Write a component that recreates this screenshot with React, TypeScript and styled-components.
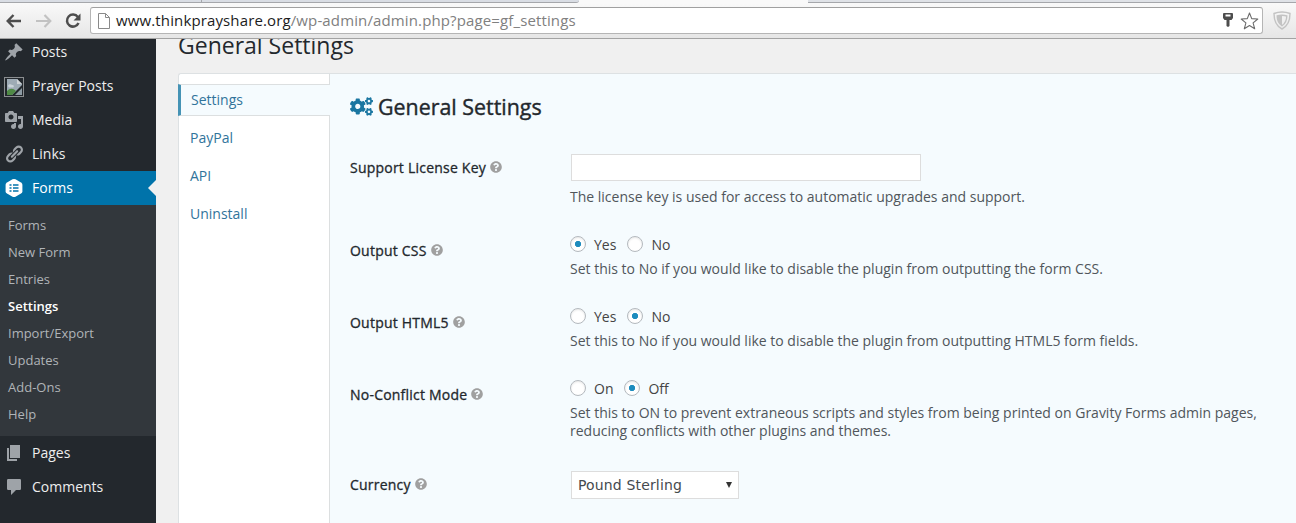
import React from 'react';
import styled, { createGlobalStyle, css } from 'styled-components';
import { FaCogs, FaQuestionCircle } from 'react-icons/fa';

const GlobalStyle = createGlobalStyle`
  * { box-sizing: border-box; }
  body { margin: 0; background: #f0f0f0; font-family: 'Open Sans', 'Noto Sans', sans-serif; font-size: 14px; color: #444; }
  p, h1, h2 { margin: 0; }
`;

const Window = styled.div`
  display: flex;
  flex-direction: column;
  width: 1296px;
  height: 523px;
  overflow: hidden;
`;

/* Browser chrome */
const TabStrip = styled.div`
  display: flex;
  height: 3px;
  background: #f5f6f8;
  flex: none;
`;
const BackTabs = styled.div`
  display: flex;
  justify-content: flex-end;
  width: 579px;
  background: #d9dde4;
  border-bottom: 1px solid #a5a7ab;
  border-bottom-right-radius: 3px;
`;
const TabEdge = styled.div`
  width: 378px;
  border-left: 1px solid #a5a7ab;
`;
const ActiveTab = styled.div`
  width: 229px;
  background: #f9f9f9;
`;
const OtherTabs = styled.div`
  flex: 1;
  background: #dfe2e7;
  border-bottom: 1px solid #a5a7ab;
`;
const Toolbar = styled.div`
  display: flex;
  align-items: center;
  flex: none;
  height: 36px;
  padding: 0 5px 0 6px;
  background: linear-gradient(#f9f9f9, #e6e6e6);
  border-bottom: 1px solid #a3a3a3;
`;
const NavIcon = styled.svg<{ $gap: number }>`
  flex: none;
  margin-right: ${p => p.$gap}px;
`;
const ShieldIcon = styled.svg`
  flex: none;
  margin-left: 10px;
`;
const AddressBar = styled.div`
  display: flex;
  align-items: center;
  flex: 1;
  height: 27px;
  padding: 0 3px 0 7px;
  background: #fff;
  border: 1px solid #b5b5b5;
  border-top-color: #a0a0a0;
  border-radius: 3px;
`;
const Url = styled.div`
  flex: 1;
  margin-left: 6px;
  padding-bottom: 1px;
  font-size: 15px;
  line-height: 24px;
  letter-spacing: 0.13px;
  color: #808080;
  white-space: nowrap;
`;
const Host = styled.span`
  color: #1c1c1c;
`;

/* Admin layout */
const Admin = styled.div`
  display: flex;
  flex: 1;
  min-height: 0;
`;
const Sidebar = styled.nav`
  flex: none;
  display: flex;
  flex-direction: column;
  width: 156px;
  background: #23282d;
  overflow: hidden;
`;
const Menu = styled.div`
  margin-top: -4px;
`;
const MenuRow = styled.div<{ $active?: boolean }>`
  display: flex;
  align-items: center;
  gap: 8px;
  height: 34px;
  padding-left: 4px;
  color: #eee;
  fill: #9ea3a8;
  ${p => p.$active && css`
    background: #0073aa;
    color: #fff;
    fill: #fff;
  `}
  svg { flex: none; }
`;
const MenuText = styled.span`
  padding-bottom: 2px;
`;
const Pointer = styled.span`
  margin-left: auto;
  border: 8px solid transparent;
  border-right-color: #f0f0f0;
  border-left: 0;
`;
const SubMenu = styled.div`
  height: 231px;
  padding: 7px 8px;
  background: #32373c;
`;
const SubItem = styled.div<{ $current?: boolean }>`
  height: 27px;
  line-height: 27px;
  font-size: 13px;
  font-weight: ${p => (p.$current ? 600 : 400)};
  color: ${p => (p.$current ? '#fff' : '#b0b4b8')};
`;

const Main = styled.main`
  flex: 1;
  display: flex;
  flex-direction: column;
  padding-left: 22px;
  overflow: hidden;
`;
const PageTitle = styled.h1`
  flex: none;
  height: 38px;
  margin-top: -4px;
  line-height: 20px;
  font-size: 23px;
  font-weight: 400;
  color: #23282d;
`;
const Panel = styled.div`
  flex: 1;
  display: flex;
  background: #f5fbfe;
  border: 1px solid #dde1e3;
  border-width: 1px 0 0 1px;
  border-top-left-radius: 3px;
`;
const Tabs = styled.div`
  flex: none;
  display: flex;
  flex-direction: column;
  width: 151px;
  background: #fff;
  border-top-left-radius: 3px;
`;
const TabSpacer = styled.div<{ $height?: number }>`
  ${p => (p.$height ? `height: ${p.$height}px;` : 'flex: 1;')}
  border-right: 1px solid #dcdfe0;
`;
const Tab = styled.div<{ $active?: boolean }>`
  height: 38px;
  padding-left: 11px;
  line-height: 38px;
  color: #31749b;
  border-right: 1px solid #dcdfe0;
  ${p => p.$active && css`
    height: 32px;
    line-height: 30px;
    padding-left: 10px;
    background: #f5fbfe;
    border: 1px solid #dcdfe0;
    border-width: 1px 0;
    border-left: 3px solid #4593b5;
    margin-left: -1px;
  `}
`;
const Content = styled.section`
  flex: 1;
  padding: 17px 0 0 20px;
`;
const SectionTitle = styled.h2`
  display: flex;
  align-items: center;
  gap: 5px;
  height: 30px;
  font-size: 21.4px;
  font-weight: 400;
  -webkit-text-stroke: 0.4px #23282d;
  color: #23282d;
  svg { color: #1a76a1; -webkit-text-stroke: 0; }
`;
const Row = styled.div<{ $top: number }>`
  display: flex;
  margin-top: ${p => p.$top}px;
`;
const Label = styled.div<{ $height?: number }>`
  display: flex;
  align-items: center;
  gap: 4px;
  flex: none;
  width: 220px;
  height: ${p => p.$height ?? 30}px;
  font-weight: 400;
  -webkit-text-stroke: 0.3px #23282d;
  letter-spacing: 0.22px;
  color: #23282d;
  svg { color: #a0a0a0; margin-bottom: 1px; }
`;
const Field = styled.div`
  width: 700px;
`;
const TextInput = styled.input`
  display: block;
  width: 350px;
  height: 27px;
  margin-left: 1px;
  border: 1px solid #ddd;
  background: #fff;
  outline: none;
`;
const Hint = styled.p`
  line-height: 18px;
  margin-top: 7px;
  color: #50565b;
`;
const Radios = styled.div`
  display: flex;
  height: 18px;
  align-items: center;
`;
const RadioLabel = styled.label`
  display: flex;
  align-items: center;
  gap: 8px;
  margin-right: 11px;
`;
const Radio = styled.span<{ $on?: boolean }>`
  width: 16px;
  height: 16px;
  border: 1px solid #b4b9be;
  border-radius: 50%;
  background: ${p => (p.$on ? 'radial-gradient(circle, #1e8cbe 2.8px, #fff 3.5px)' : '#fff')};
  box-shadow: inset 0 1px 2px rgba(0, 0, 0, 0.1);
`;
const Select = styled.div`
  display: flex;
  align-items: center;
  justify-content: space-between;
  width: 168px;
  height: 28px;
  margin-left: 1px;
  padding: 0 6px 0 6px;
  border: 1px solid #ddd;
  background: #fff;
  font-family: 'DejaVu Sans', sans-serif;
  font-size: 14px;
  letter-spacing: 0.15px;
  color: #454a4e;
`;

const dash = {
  post: 'M10.44 3.02l1.82-1.82 6.36 6.35-1.83 1.82c-1.05-.68-2.48-.57-3.41.36l-.75.75c-.92.93-1.04 2.35-.35 3.41l-1.83 1.82-2.41-2.41-2.8 2.79c-.42.42-3.38 2.71-3.8 2.29s1.86-3.39 2.28-3.81l2.79-2.79L4.1 9.36l1.83-1.82c1.05.69 2.48.57 3.4-.36l.75-.75c.93-.92 1.05-2.35.36-3.41z',
  media: 'M13 11V4c0-.55-.45-1-1-1h-1.67L9 1H5L3.67 3H2c-.55 0-1 .45-1 1v7c0 .55.45 1 1 1h10c.55 0 1-.45 1-1zM7 4.5c1.38 0 2.5 1.12 2.5 2.5S8.38 9.5 7 9.5 4.5 8.38 4.5 7 5.62 4.5 7 4.5zM14 6h5v10.5c0 1.38-1.12 2.5-2.5 2.5S14 17.88 14 16.5s1.12-2.5 2.5-2.5c.17 0 .34.02.5.05V9h-3V6zm-4 8.05V13h2v3.5c0 1.38-1.12 2.5-2.5 2.5S7 17.88 7 16.5 8.12 14 9.5 14c.17 0 .34.02.5.05z',
  links: 'M17.74 2.76c1.68 1.69 1.68 4.41 0 6.1l-1.53 1.52c-1.12 1.12-2.7 1.47-4.14 1.09l2.62-2.61.76-.77.76-.76c.84-.84.84-2.2 0-3.04-.84-.85-2.2-.85-3.04 0l-.77.76-3.38 3.38c-.37-1.44-.02-3.02 1.1-4.14l1.52-1.53c1.69-1.68 4.42-1.68 6.1 0zM8.59 13.43l5.34-5.34c.42-.42.42-1.1 0-1.52-.44-.43-1.13-.39-1.53 0l-5.33 5.34c-.42.42-.42 1.1 0 1.52.44.43 1.13.39 1.52 0zm-.76 2.29l4.14-4.15c.38 1.44.03 3.02-1.09 4.14l-1.52 1.53c-1.69 1.68-4.41 1.68-6.1 0-1.68-1.68-1.68-4.42 0-6.1l1.53-1.52c1.12-1.12 2.7-1.47 4.14-1.1l-4.14 4.15c-.85.84-.85 2.2 0 3.05.84.84 2.2.84 3.04 0z',
  page: 'M6 15V2h10v13H6zm-1 1h8v2H3V5h2v11z',
  comments: 'M4.200 2h11.600q1.200 0 1.200 1.200v8.600q0 1.200-1.200 1.200H12l-5 5v-5H4.200Q3 13 3 11.800V3.200Q3 2 4.200 2z',
};

const Dashicon = ({ name }: { name: keyof typeof dash }) => (
  <svg width="20" height="20" viewBox="0 0 20 20"><path d={dash[name]} /></svg>
);

const BrokenImage = () => (
  <svg width="20" height="22" viewBox="0 -2 20 22">
    <rect x="0.5" y="0.5" width="19" height="19" fill="none" stroke="#8b8e90" />
    <path d="M3 2h10l5 5v1L8 18H3z" fill="#9eabb5" />
    <path d="M4 9c0-2 3-2.500 4-1 2-.5 2.500 2 1 2.500H5z" fill="#c9d2d8" />
    <path d="M3 14c3-3 6-3 9 0l-4 4H3z" fill="#4f8a45" />
    <path d="M13 2v5h5z" fill="#cfd4d7" />
    <path d="M18 11v7h-7z" fill="#8d9ba4" />
  </svg>
);

const FormsIcon = () => (
  <svg width="20" height="20" viewBox="0 0 20 20">
    <path d="M8.500 1.300Q10 .6 11.500 1.300L17 4.400Q18.400 5.200 18.400 6.800V13.200Q18.400 14.800 17 15.600L11.500 18.700Q10 19.400 8.500 18.700L3 15.600Q1.600 14.800 1.600 13.200V6.800Q1.600 5.200 3 4.400Z" />
    <path d="M5.500 7h2M9 7h5.500M5.500 10h2M9 10h5.500M5.500 13h2M9 13h5.500" stroke="#0073aa" strokeWidth="1.500" />
  </svg>
);

const subItems = ['Forms', 'New Form', 'Entries', 'Settings', 'Import/Export', 'Updates', 'Add-Ons', 'Help'];

const Help = () => <FaQuestionCircle size={12} />;

const MenuItem = ({ icon, text, active }: { icon: React.ReactNode; text: string; active?: boolean }) => (
  <MenuRow $active={active}>
    {icon}
    <MenuText>{text}</MenuText>
    {active && <Pointer />}
  </MenuRow>
);

const RadioPair = ({ options, selected }: { options: string[]; selected: string }) => (
  <Radios>
    {options.map(o => (
      <RadioLabel key={o}><Radio $on={o === selected} />{o}</RadioLabel>
    ))}
  </Radios>
);

export default function App() {
  return (
    <Window>
      <GlobalStyle />
      <TabStrip>
        <BackTabs><TabEdge /></BackTabs>
        <ActiveTab />
        <OtherTabs />
      </TabStrip>
      <Toolbar>
        <NavIcon $gap={14} width="16" height="14" viewBox="0 0 16 14" fill="none" stroke="#4d4d4d" strokeWidth="2.400">
          <path d="M7.500 1L1.700 7l5.800 6M2 7h13" />
        </NavIcon>
        <NavIcon $gap={13} width="16" height="14" viewBox="0 0 16 14" fill="none" stroke="#c2c2c2" strokeWidth="2.200">
          <path d="M8.500 1l5.800 6-5.800 6M14 7H0" />
        </NavIcon>
        <NavIcon $gap={9} width="16" height="16" viewBox="0 0 16 16" fill="none" stroke="#4d4d4d" strokeWidth="2.500">
          <path d="M12.800 4A6 6 0 1 0 13.500 10" />
          <path d="M15.500 .5V7.500H8.500z" fill="#4d4d4d" stroke="none" />
        </NavIcon>
        <AddressBar>
          <svg width="12" height="16" viewBox="0 0 12 16" fill="#fff" stroke="#8a8a8a">
            <path d="M.5.500H7.500L11.500 4.500V15.500H.5zM7.500.500V4.500H11.500" />
          </svg>
          <Url><Host>www.thinkprayshare.org</Host>/wp-admin/admin.php?page=gf_settings</Url>
          <NavIcon $gap={7} width="10" height="15" viewBox="0 0 10 15">
            <path d="M1 0h8q1 0 1 1v4L8.500 7H6.500v6L5 14 3.500 13V7H1.500L0 5V1q0-1 1-1zM2.500 1.500v2h5v-2z" fill="#4d4d4d" fillRule="evenodd" />
          </NavIcon>
          <svg width="19" height="18" viewBox="0 0 19 18" fill="#fff" stroke="#6c6c6c" strokeWidth="1.100">
            <path d="M9.500 1L11.700 6.600 17.800 7 13.100 10.900 14.700 16.800 9.500 13.500 4.300 16.800 5.900 10.900 1.200 7 7.300 6.600z" strokeLinejoin="round" />
          </svg>
        </AddressBar>
        <ShieldIcon width="18" height="19" viewBox="0 0 18 19" fill="none" stroke="#c3c3c3" strokeWidth="1.400">
          <path d="M9 1C12 1 14.500 1.500 17 2.500 17 10 15 15 9 18 3 15 1 10 1 2.500 3.500 1.500 6 1 9 1z" />
          <path d="M9 4.200c2 0 3.500.3 4.800.8C13.700 9.500 12.500 12.500 9 14.700 5.500 12.500 4.300 9.500 4.200 5 5.500 4.500 7 4.200 9 4.200z" />
          <path d="M9 4.200V14.700C5.500 12.500 4.300 9.500 4.200 5 5.500 4.500 7 4.200 9 4.200z" fill="#c3c3c3" stroke="none" />
        </ShieldIcon>
      </Toolbar>
      <Admin>
        <Sidebar>
          <Menu>
            <MenuItem icon={<Dashicon name="post" />} text="Posts" />
            <MenuItem icon={<BrokenImage />} text="Prayer Posts" />
            <MenuItem icon={<Dashicon name="media" />} text="Media" />
            <MenuItem icon={<Dashicon name="links" />} text="Links" />
            <MenuItem icon={<FormsIcon />} text="Forms" active />
            <SubMenu>
              {subItems.map(s => <SubItem key={s} $current={s === 'Settings'}>{s}</SubItem>)}
            </SubMenu>
            <MenuItem icon={<Dashicon name="page" />} text="Pages" />
            <MenuItem icon={<Dashicon name="comments" />} text="Comments" />
          </Menu>
        </Sidebar>
        <Main>
          <PageTitle>General Settings</PageTitle>
          <Panel>
            <Tabs>
              <TabSpacer $height={10} />
              <Tab $active>Settings</Tab>
              <TabSpacer $height={3} />
              <Tab>PayPal</Tab>
              <Tab>API</Tab>
              <Tab>Uninstall</Tab>
              <TabSpacer />
            </Tabs>
            <Content>
              <SectionTitle><FaCogs size={23} />General Settings</SectionTitle>
              <Row $top={33}>
                <Label $height={27}>Support License Key <Help /></Label>
                <Field>
                  <TextInput />
                  <Hint>The license key is used for access to automatic upgrades and support.</Hint>
                </Field>
              </Row>
              <Row $top={29}>
                <Label>Output CSS <Help /></Label>
                <Field>
                  <RadioPair options={['Yes', 'No']} selected="Yes" />
                  <Hint>Set this to No if you would like to disable the plugin from outputting the form CSS.</Hint>
                </Field>
              </Row>
              <Row $top={29}>
                <Label>Output HTML5 <Help /></Label>
                <Field>
                  <RadioPair options={['Yes', 'No']} selected="No" />
                  <Hint>Set this to No if you would like to disable the plugin from outputting HTML5 form fields.</Hint>
                </Field>
              </Row>
              <Row $top={29}>
                <Label>No-Conflict Mode <Help /></Label>
                <Field>
                  <RadioPair options={['On', 'Off']} selected="Off" />
                  <Hint>Set this to ON to prevent extraneous scripts and styles from being printed on Gravity Forms admin pages, reducing conflicts with other plugins and themes.</Hint>
                </Field>
              </Row>
              <Row $top={31}>
                <Label $height={27}>Currency <Help /></Label>
                <Select>
                  Pound Sterling
                  <svg width="6" height="6" viewBox="0 0 6 6"><path d="M0 0H6L3 6z" fill="#333" /></svg>
                </Select>
              </Row>
            </Content>
          </Panel>
        </Main>
      </Admin>
    </Window>
  );
}
